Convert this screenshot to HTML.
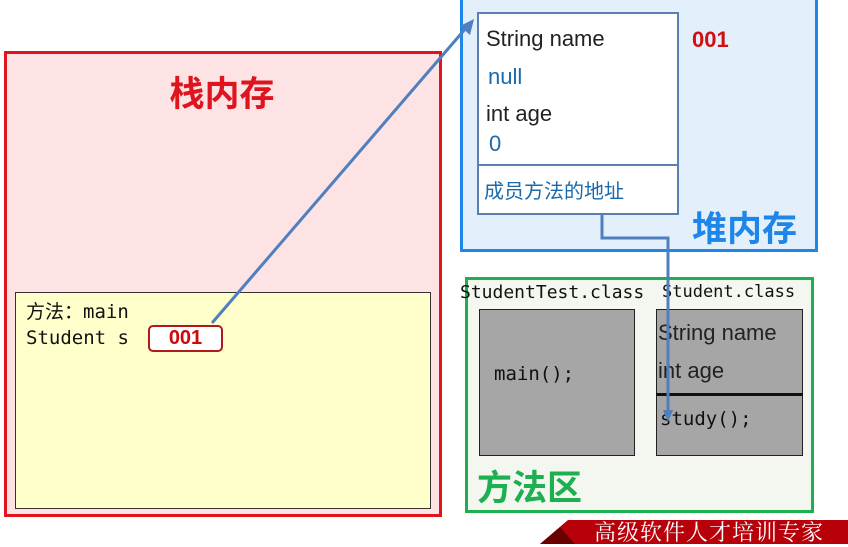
<!DOCTYPE html>
<html><head><meta charset="utf-8"><style>
*{margin:0;padding:0;box-sizing:border-box}
body{width:848px;height:544px;background:#fff;position:relative;overflow:hidden;font-family:"Liberation Sans","Noto Sans CJK SC",sans-serif}
.a{position:absolute}
.mono{font-family:"DejaVu Sans Mono","Liberation Mono","Noto Sans CJK SC",monospace}
</style></head><body>
<!-- stack -->
<div class="a" style="left:4px;top:51px;width:438px;height:466px;background:#fde3e4;border:3px solid #e0141e"></div>
<div class="a" style="left:160px;top:66px;width:124px;text-align:center;font-size:35px;font-weight:bold;color:#e0141e;white-space:nowrap">栈内存</div>
<div class="a" style="left:15px;top:292px;width:416px;height:217px;background:#ffffcc;border:1px solid #333"></div>
<div class="a mono" style="left:26px;top:299px;font-size:19px;line-height:26px;color:#111">方法：main<br>Student s</div>
<div class="a" style="left:148px;top:325px;width:75px;height:27px;border:2px solid #b01a1a;border-radius:5px;background:#fff;color:#cc0a0a;font-weight:bold;font-size:20px;text-align:center;line-height:23px">001</div>
<!-- heap -->
<div class="a" style="left:460px;top:-4px;width:358px;height:256px;background:#e3f0fb;border:3px solid #1e86e8"></div>
<div class="a" style="left:477px;top:12px;width:202px;height:203px;background:#fff;border:2px solid #5b7fb0"></div>
<div class="a" style="left:477px;top:164px;width:202px;height:2px;background:#5b7fb0"></div>
<div class="a" style="left:486px;top:26px;font-size:22px;color:#222">String name</div>
<div class="a" style="left:488px;top:64px;font-size:22px;color:#1a6aab">null</div>
<div class="a" style="left:486px;top:101px;font-size:22px;color:#222">int age</div>
<div class="a" style="left:489px;top:131px;font-size:22px;color:#1a6aab">0</div>
<div class="a" style="left:484px;top:175px;font-size:20px;color:#1a6aab">成员方法的地址</div>
<div class="a" style="left:692px;top:27px;font-size:22px;font-weight:bold;color:#d10f0f">001</div>
<div class="a" style="left:692px;top:201px;font-size:35px;font-weight:bold;color:#1e86e8;white-space:nowrap">堆内存</div>
<!-- method area -->
<div class="a" style="left:465px;top:277px;width:349px;height:236px;background:#f4f7ef;border:3px solid #1cb050"></div>
<div class="a mono" style="left:460px;top:282px;font-size:18px;color:#111">StudentTest.class</div>
<div class="a mono" style="left:662px;top:282px;font-size:17px;color:#111">Student.class</div>
<div class="a" style="left:479px;top:309px;width:156px;height:147px;background:#a6a6a6;border:1px solid #222"></div>
<div class="a mono" style="left:494px;top:363px;font-size:19px;color:#111">main();</div>
<div class="a" style="left:656px;top:309px;width:147px;height:147px;background:#a6a6a6;border:1px solid #222"></div>
<div class="a" style="left:656px;top:393px;width:147px;height:3px;background:#111"></div>
<div class="a" style="left:658px;top:320px;font-size:22px;color:#222">String name</div>
<div class="a" style="left:658px;top:358px;font-size:22px;color:#222">int age</div>
<div class="a mono" style="left:660px;top:408px;font-size:19px;color:#111">study();</div>
<div class="a" style="left:477px;top:460px;font-size:35px;font-weight:bold;color:#1cb050;white-space:nowrap">方法区</div>
<!-- arrows -->
<svg class="a" style="left:0;top:0" width="848" height="544">
<line x1="212" y1="323" x2="466" y2="28" stroke="#4f7fbf" stroke-width="3"/>
<polygon points="474,19 470,35 460,26" fill="#4f7fbf"/>
<polyline points="602,215 602,238 668,238 668,414" fill="none" stroke="#4f7fbf" stroke-width="3"/>
<polygon points="668,422 663,410 673,410" fill="#4f7fbf"/>
<polygon points="540,544 568,520 848,520 848,544" fill="#b8000a"/>
<polygon points="540,544 560,527 575,544" fill="#6a0000"/>
</svg>
<div class="a" style="left:594px;top:519px;font-size:22px;line-height:26px;color:#fff;font-family:'Noto Serif CJK SC',serif;letter-spacing:1px;white-space:nowrap">高级软件人才培训专家</div>
</body></html>
